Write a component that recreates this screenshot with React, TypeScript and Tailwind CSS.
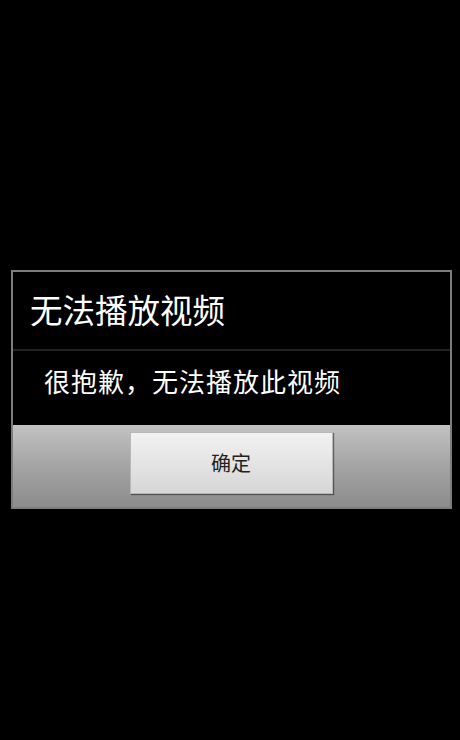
import React from 'react';

const font = { fontFamily: '"Noto Sans CJK SC", "Noto Sans", sans-serif' };

export default function App() {
  return (
    <div className="w-[460px] h-[740px] bg-black overflow-hidden" style={font}>
      <div className="pt-[270px] pl-[11px]">
        <div className="w-[441px] border-2 border-[#7c7c7c] bg-black">
          {/* Title */}
          <div className="h-[77px] flex items-center pl-[17px] pb-[3px]">
            <span className="text-[32.5px] leading-none text-white">无法播放视频</span>
          </div>
          <div className="h-[2px] bg-[#222]" />
          {/* Message */}
          <div className="h-[74px] flex items-center pl-[31px] pb-[14px]">
            <span className="text-[26px] leading-none text-white tracking-[1px]">很抱歉，无法播放此视频</span>
          </div>
          {/* Button bar */}
          <div className="h-[82px] bg-gradient-to-b from-[#c2c2c2] via-[#a4a4a4] to-[#8c8c8c] flex justify-center pt-[7px] pr-[1px]">
            <button className="w-[203px] h-[62px] bg-gradient-to-b from-[#f2f2f2] to-[#d6d6d6] border border-[#b8b8b8] shadow-[1px_1px_1px_rgba(0,0,0,0.45)] flex items-center justify-center">
              <span className="text-[20px] leading-none text-[#222]">确定</span>
            </button>
          </div>
        </div>
      </div>
    </div>
  );
}
